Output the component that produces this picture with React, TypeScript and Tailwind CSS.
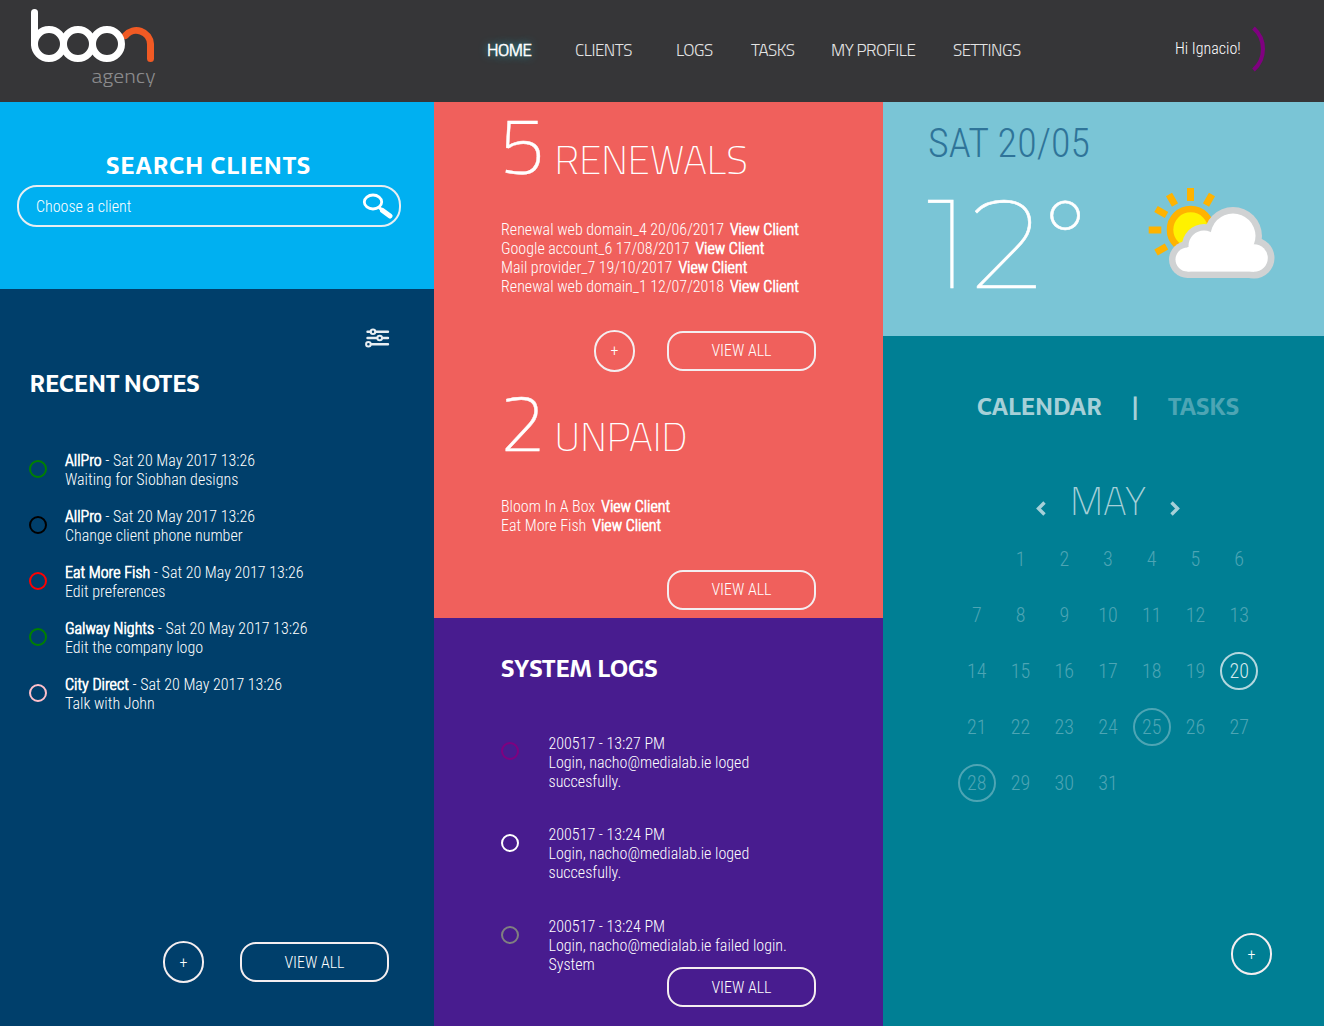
import React from "react";

const COND = "font-['Roboto_Condensed','Roboto',sans-serif] font-light whitespace-nowrap";
const HEAD = "font-['Sarala','Open_Sans',sans-serif] font-bold whitespace-nowrap text-2xl leading-[34px]";
const THIN = "font-['Titillium_Web','Roboto',sans-serif] font-extralight whitespace-nowrap text-[40px]";
const HEAVY = "[-webkit-text-stroke:0.7px_white]";

function ViewAll({ className = "" }: { className?: string }) {
  return (
    <button className={`flex h-10 w-[149px] shrink-0 items-center justify-center rounded-2xl border-2 border-[#f4eef0] text-base leading-[19px] text-white ${COND} ${className}`}>
      VIEW ALL
    </button>
  );
}

function Plus({ className = "" }: { className?: string }) {
  return (
    <button className={`flex h-[42px] w-[41px] shrink-0 items-center justify-center rounded-full border-2 border-[#f4eef0] text-base leading-[19px] text-white ${COND} ${className}`}>
      +
    </button>
  );
}

const nav = [
  { t: "CLIENTS", w: "w-[101px]" },
  { t: "LOGS", w: "w-[75px]" },
  { t: "TASKS", w: "w-[80px]" },
  { t: "MY PROFILE", w: "w-[122px]" },
  { t: "SETTINGS", w: "w-[69px]" },
];

function Logo() {
  return (
    <svg width="126" height="84" viewBox="0 0 126 84" className="ml-[30px] mt-2 shrink-0">
      <g fill="none" strokeWidth="7" strokeLinecap="round">
        <path d="M95.500 27.500A14.200 14.200 0 0 1 120.500 36V50.500" stroke="#f15a24" />
        <g stroke="#fff">
          <path d="M4.500 4.500V36" />
          <circle cx="19" cy="36" r="14.500" />
          <circle cx="48" cy="36" r="14.500" />
          <circle cx="77" cy="36" r="14.500" />
        </g>
      </g>
      <text x="61.500" y="74.500" fontSize="20" textLength="64" lengthAdjust="spacingAndGlyphs" fill="#8b8b8d" fontFamily="Titillium Web" fontWeight="300">
        agency
      </text>
    </svg>
  );
}

function Header() {
  return (
    <header className="flex h-[102px] items-start bg-[#363638]">
      <Logo />
      <nav className="ml-[331px] mt-[40px] flex whitespace-nowrap font-['Titillium_Web','Open_Sans',sans-serif] text-[17px] font-light leading-5 tracking-[-0.5px] text-[#e4e4e4]">
        <span className="w-[88px] text-white [-webkit-text-stroke:0.5px_white] [text-shadow:0_0_8px_#26c6da]">HOME</span>
        {nav.map((n) => (
          <span key={n.t} className={n.w}>{n.t}</span>
        ))}
      </nav>
      <div className={`ml-[153px] mt-[39px] w-[67px] text-base leading-5 text-white ${COND}`}>Hi Ignacio!</div>
      <svg width="20" height="50" viewBox="0 0 20 50" className="ml-[8px] mt-[24px]">
        <path d="M3.500 4A28 28 0 0 1 3.500 46" fill="none" stroke="#800080" strokeWidth="4" />
      </svg>
    </header>
  );
}

const notes = [
  { c: "border-[green]", n: "AllPro", b: "Waiting for Siobhan designs" },
  { c: "border-black", n: "AllPro", b: "Change client phone number" },
  { c: "border-[red]", n: "Eat More Fish", b: "Edit preferences" },
  { c: "border-[green]", n: "Galway Nights", b: "Edit the company logo" },
  { c: "border-[pink]", n: "City Direct", b: "Talk with John" },
];

function Left() {
  return (
    <div className="flex w-[434px] flex-col">
      <section className="h-[187px] bg-[#00b0f1] pl-[17px] pt-[47px] text-white">
        <h2 className={`ml-[89px] tracking-[1px] ${HEAD}`}>SEARCH CLIENTS</h2>
        <div className={`mt-0.5 flex h-[42px] w-96 items-center justify-between rounded-[20px] border-2 border-[#e8eef2] pl-[17px] pr-[6px] text-base leading-[19px] ${COND}`}>
          Choose a client
          <svg width="31" height="26" viewBox="0 0 31 26" fill="none" stroke="#fff">
            <ellipse cx="11" cy="9" rx="8.700" ry="7" strokeWidth="2.800" />
            <path d="M17 14.500l4 3" strokeWidth="3" />
            <path d="M20.500 17.500l7.500 5.500" strokeWidth="5" strokeLinecap="round" />
          </svg>
        </div>
      </section>
      <section className="flex h-[737px] flex-col bg-[#003f6b] text-white">
        <svg width="26" height="22" viewBox="0 0 26 22" className="ml-[365px] mt-[38px] shrink-0" fill="none" stroke="#e8eef2" strokeWidth="2">
          <path d="M2.500 4.800H5.500M10.500 4.800H23M2.500 11H12M17.500 11H23M6 17.200H23" strokeWidth="2.400" strokeLinecap="round" />
          <circle cx="8" cy="4.800" r="2.300" />
          <circle cx="14.700" cy="11" r="2.300" />
          <circle cx="3.400" cy="17.200" r="2.300" />
        </svg>
        <h2 className={`ml-[29.5px] mt-[18px] ${HEAD}`}>RECENT NOTES</h2>
        <ul className={`ml-[29px] mt-[50px] flex flex-col gap-[18px] text-base leading-[19px] ${COND}`}>
          {notes.map((n, i) => (
            <li key={i} className="flex h-[38px] gap-[18px]">
              <i className={`mt-[9px] size-[18px] rounded-full border-2 ${n.c}`} />
              <div>
                <span className={HEAVY}>{n.n}</span> - Sat 20 May 2017 13:26
                <br />
                {n.b}
              </div>
            </li>
          ))}
        </ul>
        <div className="mb-[43px] ml-[163px] mt-auto flex items-center gap-9">
          <Plus />
          <ViewAll />
        </div>
      </section>
    </div>
  );
}

function Rows({ rows }: { rows: string[] }) {
  return (
    <ul className={`text-base leading-[19px] ${COND}`}>
      {rows.map((r) => (
        <li key={r} className="flex gap-[6px]">
          <span>{r}</span>
          <span className={HEAVY}>View Client</span>
        </li>
      ))}
    </ul>
  );
}

const renewals = [
  "Renewal web domain_4 20/06/2017",
  "Google account_6 17/08/2017",
  "Mail provider_7 19/10/2017",
  "Renewal web domain_1 12/07/2018",
];
const unpaid = ["Bloom In A Box", "Eat More Fish"];
const logs = [
  { c: "border-[purple]", t: "200517 - 13:27 PM", l: "Login, nacho@medialab.ie loged succesfully.", h: "h-[91px]", m: "mt-[8px]" },
  { c: "border-white", t: "200517 - 13:24 PM", l: "Login, nacho@medialab.ie loged succesfully.", h: "h-[92px]", m: "mt-[9px]" },
  { c: "border-[gray]", t: "200517 - 13:24 PM", l: "Login, nacho@medialab.ie failed login. System", h: "h-[57px]", m: "mt-[9px]" },
];

function Middle() {
  return (
    <div className="flex w-[449px] flex-col text-white">
      <section className="h-[516px] bg-[#f0605c] pl-[67px]">
        <h2 className={`h-[118px] leading-[84px] ${THIN}`}>
          <span className="-ml-px mr-px text-[80px] leading-[84px] [-webkit-text-stroke:0.4px_white]">5</span> RENEWALS
        </h2>
        <Rows rows={renewals} />
        <div className="ml-[93px] mt-[34px] flex items-center gap-8">
          <Plus className="pb-px" />
          <ViewAll className="pb-0.5" />
        </div>
        <h2 className={`h-[125px] pt-[7px] leading-[84px] ${THIN}`}>
          <span className="-ml-px mr-px text-[80px] leading-[84px] [-webkit-text-stroke:0.4px_white]">2</span> UNPAID
        </h2>
        <Rows rows={unpaid} />
        <ViewAll className="ml-[166px] mt-[35px] pb-0.5" />
      </section>
      <section className="h-[408px] bg-[#481c8f] pl-[67px] pt-[34px]">
        <h2 className={HEAD}>SYSTEM LOGS</h2>
        <ul className="mt-12 font-['Roboto_Condensed','Roboto',sans-serif] text-base font-light leading-[19px]">
          {logs.map((l, i) => (
            <li key={i} className={`flex gap-[29.5px] ${l.h}`}>
              <i className={`size-[18px] shrink-0 rounded-full border-2 ${l.m} ${l.c}`} />
              <div className="w-[250px]">
                {l.t}
                <br />
                {l.l}
              </div>
            </li>
          ))}
        </ul>
        <ViewAll className="-mt-[7px] ml-[166px]" />
      </section>
    </div>
  );
}

const days = [0, ...Array.from({ length: 31 }, (_, i) => i + 1)];

function dayStyle(d: number) {
  if (d === 20) return "border-[#b3d7de] text-[#d5e9ed]";
  if (d === 25 || d === 28) return "border-[#4da5b4] text-[#4da5b4]";
  return "border-transparent text-[#4da5b4]";
}

function Weather() {
  return (
    <svg width="130" height="96" viewBox="0 0 130 96" className="shrink-0">
      <path
        d="M43.500 1V14M22 7.500l6 10.500M65 7.500l-6 10.500M9 22l10.500 6M1.700 43H14.300M9 65.500l10.500-6"
        stroke="#ffb300"
        strokeWidth="7"
      />
      <circle cx="43.700" cy="42.700" r="20.700" fill="#fff200" stroke="#ffb300" strokeWidth="6.600" />
      <g fill="#d0d2d3">
        <circle cx="86" cy="49" r="29" />
        <circle cx="57" cy="59" r="22" />
        <circle cx="40.500" cy="72.500" r="18.500" />
        <circle cx="107" cy="71" r="20.500" />
        <rect x="40.500" y="60" width="66.500" height="31" />
      </g>
      <g fill="#fff">
        <circle cx="86" cy="49" r="22.500" />
        <circle cx="57" cy="59" r="15.500" />
        <circle cx="40.500" cy="72.500" r="12" />
        <circle cx="107" cy="71" r="13.800" />
        <rect x="40.500" y="60" width="66.500" height="24.600" />
      </g>
    </svg>
  );
}

function Right() {
  return (
    <div className="flex w-[441px] flex-col">
      <section className="h-[234px] bg-[#7ac5d6] pl-[45px] pt-[18px]">
        <div className={`text-[40px] leading-[48px] tracking-[0.1px] text-[#2f7499] ${COND}`}>SAT 20/05</div>
        <div className="flex h-[130px] items-start pt-[19px] font-['Montserrat','Inter',sans-serif] text-white">
          <span className="-ml-px mt-[-5px] w-[114px] text-[125px] font-[150] leading-[122px] tracking-[2px] [-webkit-text-stroke:0.6px_white]">12</span>
          <span className="ml-[4px] mt-[-1px] w-[40px] text-[96px] font-[200] leading-[96px] [-webkit-text-stroke:0.6px_white]">°</span>
          <span className="ml-[62px]"><Weather /></span>
        </div>
      </section>
      <section className="flex h-[690px] flex-col bg-[#007f94]">
        <div className={`ml-[94px] mt-[54px] flex text-[#a6d0d8] ${HEAD}`}>
          <span className="w-[125px]">CALENDAR</span>
          <span className="w-[66px] text-center">|</span>
          <span className="text-[#4da5b4]">TASKS</span>
        </div>
        <div className={`ml-[153px] mt-[53px] flex leading-[48px] text-[#a6d0d8] ${THIN}`}>
          <svg width="10" height="15" viewBox="0 0 10 15" className="mt-[24px]" fill="none" stroke="#a6d0d8" strokeWidth="3.400">
            <path d="M8.500 1.500l-6 6 6 6" />
          </svg>
          <span className="ml-[24px] w-[78px]">MAY</span>
          <svg width="10" height="15" viewBox="0 0 10 15" className="ml-[22px] mt-[24px]" fill="none" stroke="#a6d0d8" strokeWidth="3.400">
            <path d="M1.500 1.500l6 6-6 6" />
          </svg>
        </div>
        <div className={`ml-[72px] mt-[15px] grid w-[306px] grid-cols-7 gap-y-[18px] text-xl leading-6 ${COND}`}>
          {days.map((d) => (
            <div key={d} className={`mx-auto flex size-[38px] items-center justify-center rounded-full border-2 ${dayStyle(d)}`}>
              {d > 0 && d}
            </div>
          ))}
        </div>
        <div className="mb-[51px] ml-[348px] mt-auto">
          <Plus />
        </div>
      </section>
    </div>
  );
}

export default function App() {
  return (
    <div className="h-[1026px] w-[1324px] overflow-hidden">
      <Header />
      <main className="flex">
        <Left />
        <Middle />
        <Right />
      </main>
    </div>
  );
}
